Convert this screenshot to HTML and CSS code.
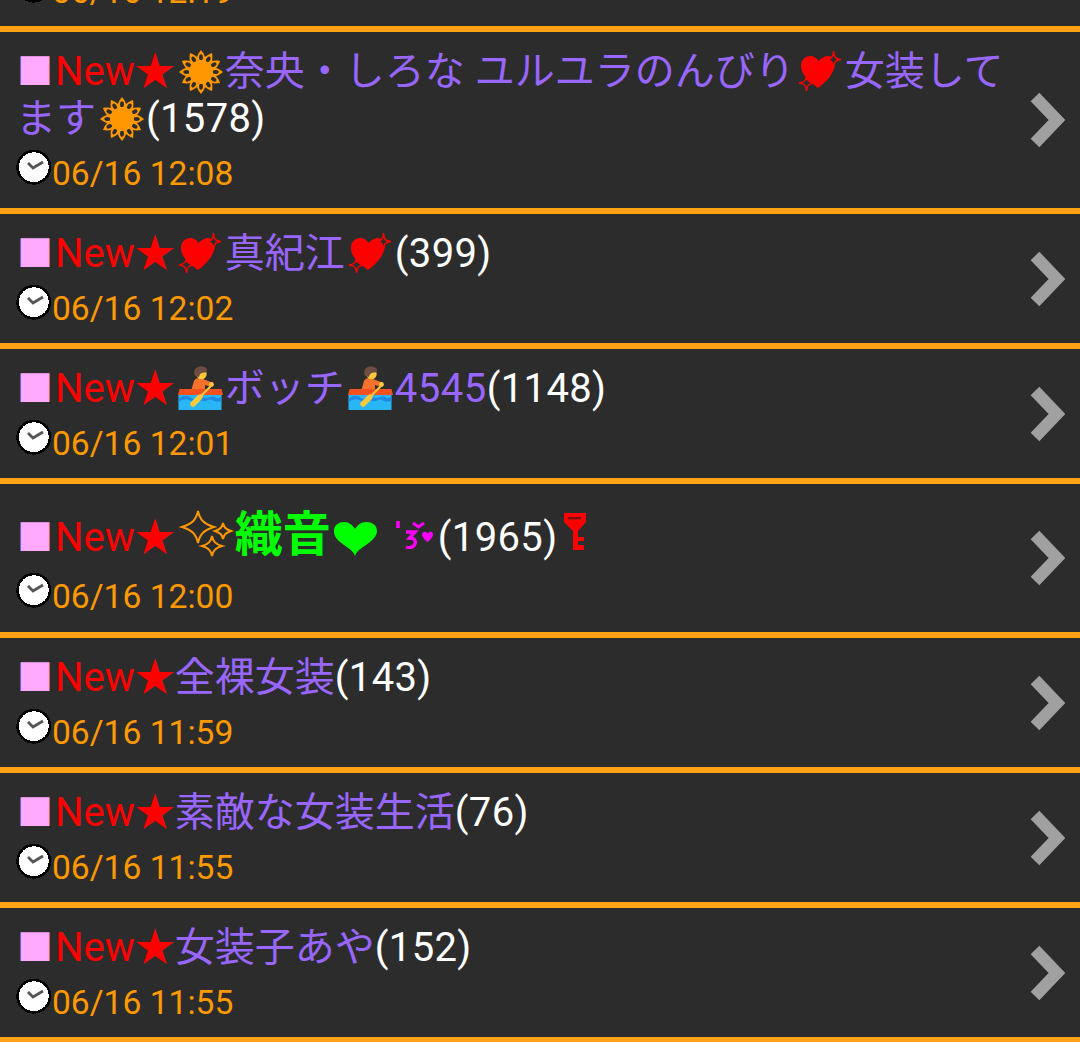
FILE: index.html
```html
<!DOCTYPE html>
<html lang="ja">
<head>
    <meta charset="UTF-8">
    <meta name="viewport" content="width=device-width, initial-scale=1.0">
    <title>New</title>
    <link rel="stylesheet" href="styles.css">
</head>
<body>
    <svg class="defs" xmlns="http://www.w3.org/2000/svg">
        <symbol id="flower" viewBox="-1.5 0 50 50">
            <g id="petal">
                <path d="M19.5 16 C19.5 10 22 6 24.5 3 C27 6 29.5 10 29.5 16Z" fill="#ff9800"/>
                <ellipse cx="24.5" cy="10.5" rx="1.9" ry="3.2" fill="#2c2c2c"/>
            </g>
            <use href="#petal" transform="rotate(30 24.5 25)"/>
            <use href="#petal" transform="rotate(60 24.5 25)"/>
            <use href="#petal" transform="rotate(90 24.5 25)"/>
            <use href="#petal" transform="rotate(120 24.5 25)"/>
            <use href="#petal" transform="rotate(150 24.5 25)"/>
            <use href="#petal" transform="rotate(180 24.5 25)"/>
            <use href="#petal" transform="rotate(210 24.5 25)"/>
            <use href="#petal" transform="rotate(240 24.5 25)"/>
            <use href="#petal" transform="rotate(270 24.5 25)"/>
            <use href="#petal" transform="rotate(300 24.5 25)"/>
            <use href="#petal" transform="rotate(330 24.5 25)"/>
            <circle cx="24.5" cy="25" r="12" fill="#ff9800"/>
        </symbol>
        <symbol id="heart" viewBox="-2 0 50 50">
            <path d="M21 41 C12 34 4 28 4 19 C4 12 9 9 13.5 9 C17 9 20 11 21.5 14 C24 11 28 9 31 9 C36 9 38.5 13 37.5 19 C36 28 29 35 21 41Z" fill="#ff0000"/>
            <path d="M36.5 4 C37 10 38 12 44 12.5 C38 13 37 15 36.5 21 C36 15 35 13 29 12.5 C35 12 36 10 36.5 4Z" fill="#2c2c2c" stroke="#ff0000" stroke-width="1.4"/>
            <path d="M9.5 28 C10 34 11 35 17 36 C11 37 10 38 9.5 44 C9 38 8 37 2 36 C8 35 9 34 9.5 28Z" fill="#2c2c2c" stroke="#ff0000" stroke-width="1.4"/>
        </symbol>
        <symbol id="boat" viewBox="-2 0 50 50">
            <path d="M14 27 L17 17 C18 14 23 13 26 15 L35 18.5 L34 23 L28 21 L28 27Z" fill="#f4722b"/>
            <circle cx="24.5" cy="10" r="5.2" fill="#ffc83d"/>
            <path d="M18 12 C15 5 21 1.5 25.5 2.5 C31 3.5 31 7 28.5 8.5 C25 8.5 23 9 22 13Z" fill="#6d4c41"/>
            <circle cx="34.5" cy="20.5" r="2.4" fill="#ffc83d"/>
            <path d="M1 31 H46 L44.5 25 H2.5Z" fill="#f4511e"/>
            <rect x="1.5" y="31" width="43" height="15" fill="#29b6f6"/>
            <path d="M1.5 35 C6 31 10 31 14 34 C18 37 22 31 26 33 C30 36 35 31 38 33 C40 35 42 34 44.5 33 V37 C40 38 38 38 35 36 C31 34 30 38 26 37 C22 35 18 39 14 37 C10 34 6 35 1.5 38Z" fill="#1e88e5"/>
            <path d="M33 23 L22 34" stroke="#ffc83d" stroke-width="2.2" stroke-linecap="round"/>
            <path d="M23 33 L16 40" stroke="#ffc83d" stroke-width="5.4" stroke-linecap="round"/>
        </symbol>
        <symbol id="clock" viewBox="0 0 37 37">
            <circle cx="17.8" cy="18.2" r="16.2" fill="#fff" stroke="#000" stroke-width="2.6" shape-rendering="crispEdges"/>
            <path d="M12 14 L17 19 L27 13" fill="none" stroke="#555" stroke-width="2.8"/>
        </symbol>
        <symbol id="sparkles" viewBox="-2 0 60 60">
            <path d="M21 2 C23 11 27 15 37 18 C27 21 23 25 21 34 C19 25 15 21 5 18 C15 15 19 11 21 2Z" fill="none" stroke="#ff9800" stroke-width="2"/>
            <path d="M46 14 C47 18 48 20 54 22 C48 24 47 26 46 30 C45 26 44 24 38 22 C44 20 45 18 46 14Z" fill="none" stroke="#ff9800" stroke-width="2"/>
            <path d="M35 27 C36 32 38 35 45 37 C38 39 36 42 35 47 C34 42 32 39 25 37 C32 35 34 32 35 27Z" fill="none" stroke="#ff9800" stroke-width="2"/>
        </symbol>
        <symbol id="green-heart" viewBox="0 0 48 48">
            <path d="M24 46 C22.5 40 15 37 9 32 C4 28 3 24 3 21 C3 15 8 12 13 12 C18 12 21.5 15 24 19 C26.5 15 30 12 35 12 C41 12 46 15 46 21 C46 24 44 28 39 32 C33 37 25.5 40 24 46Z" fill="#00ff00"/>
        </symbol>
        <symbol id="kiss" viewBox="0 0 59 60">
            <path d="M19 12 V19" stroke="#ff00ff" stroke-width="3.6"/>
            <path d="M34 14 L39.5 18 L45 14" fill="none" stroke="#ff00ff" stroke-width="3"/>
            <path d="M27 23 H36 L30.5 29 C36 29 37 32 36 35 C34 39 30 39 27 38" fill="none" stroke="#ff00ff" stroke-width="3.4"/>
            <path d="M48.5 33 C45 30 43 28 43 25.5 C43 22 47 22 48.5 24.5 C50 22 54 22 54 25.5 C54 28 52 30 48.5 33Z" fill="#ff00ff"/>
        </symbol>
        <symbol id="key" viewBox="0 0 32 50">
            <path d="M7 4 H29 V13 L21 22 V41 H16 V22 L7 13Z" fill="#ff0000"/>
            <rect x="11" y="8" width="13" height="2.4" fill="#7a1010"/>
            <rect x="21" y="28" width="6" height="4" fill="#ff0000"/>
            <rect x="21" y="36" width="6" height="5" fill="#ff0000"/>
        </symbol>
        <symbol id="chevron" viewBox="0 0 40 60">
            <path d="M6 7 L28 30 L6 53" fill="none" stroke="#a0a0a0" stroke-width="12"/>
        </symbol>
    </svg>

    <div class="list">
        <div class="row">
            <div class="row-main">
                <div class="title"><span class="mark">■</span><span class="new">New★</span></div>
                <div class="date"><svg class="clock"><use href="#clock"/></svg>06/16 12:19</div>
            </div>
            <svg class="chevron"><use href="#chevron"/></svg>
        </div>

        <div class="row">
            <div class="row-main">
                <div class="title"><span class="mark">■</span><span class="new">New★</span><svg class="emoji"><use href="#flower"/></svg><span class="name">奈央・しろな ユルユラのんびり</span><svg class="emoji"><use href="#heart"/></svg><span class="name">女装してます</span><svg class="emoji"><use href="#flower"/></svg><span class="count">(1578)</span></div>
                <div class="date"><svg class="clock"><use href="#clock"/></svg>06/16 12:08</div>
            </div>
            <svg class="chevron"><use href="#chevron"/></svg>
        </div>

        <div class="row">
            <div class="row-main">
                <div class="title"><span class="mark">■</span><span class="new">New★</span><svg class="emoji"><use href="#heart"/></svg><span class="name">真紀江</span><svg class="emoji"><use href="#heart"/></svg><span class="count">(399)</span></div>
                <div class="date"><svg class="clock"><use href="#clock"/></svg>06/16 12:02</div>
            </div>
            <svg class="chevron"><use href="#chevron"/></svg>
        </div>

        <div class="row">
            <div class="row-main">
                <div class="title"><span class="mark">■</span><span class="new">New★</span><svg class="emoji"><use href="#boat"/></svg><span class="name">ボッチ</span><svg class="emoji"><use href="#boat"/></svg><span class="name digits">4545</span><span class="count">(1148)</span></div>
                <div class="date"><svg class="clock"><use href="#clock"/></svg>06/16 12:01</div>
            </div>
            <svg class="chevron"><use href="#chevron"/></svg>
        </div>

        <div class="row">
            <div class="row-main">
                <div class="title title-tall"><span class="mark">■</span><span class="new">New★</span><svg class="emoji-tall sparkles"><use href="#sparkles"/></svg><span class="green">織音</span><svg class="emoji-tall green-heart"><use href="#green-heart"/></svg><svg class="emoji-tall kiss"><use href="#kiss"/></svg><span class="count">(1965)</span><svg class="emoji-tall key"><use href="#key"/></svg></div>
                <div class="date"><svg class="clock"><use href="#clock"/></svg>06/16 12:00</div>
            </div>
            <svg class="chevron"><use href="#chevron"/></svg>
        </div>

        <div class="row">
            <div class="row-main">
                <div class="title"><span class="mark">■</span><span class="new">New★</span><span class="name">全裸女装</span><span class="count">(143)</span></div>
                <div class="date"><svg class="clock"><use href="#clock"/></svg>06/16 11:59</div>
            </div>
            <svg class="chevron"><use href="#chevron"/></svg>
        </div>

        <div class="row">
            <div class="row-main">
                <div class="title"><span class="mark">■</span><span class="new">New★</span><span class="name">素敵な女装生活</span><span class="count">(76)</span></div>
                <div class="date"><svg class="clock"><use href="#clock"/></svg>06/16 11:55</div>
            </div>
            <svg class="chevron"><use href="#chevron"/></svg>
        </div>

        <div class="row">
            <div class="row-main">
                <div class="title"><span class="mark">■</span><span class="new">New★</span><span class="name">女装子あや</span><span class="count">(152)</span></div>
                <div class="date"><svg class="clock"><use href="#clock"/></svg>06/16 11:55</div>
            </div>
            <svg class="chevron"><use href="#chevron"/></svg>
        </div>
    </div>
</body>
</html>
```

FILE: styles.css
```css
html {
    background: #2c2c2c;
}

body {
    margin: 0;
    height: 1042px;
    overflow: hidden;
    font-family: Roboto, "Noto Sans CJK JP", sans-serif;
    background: #2c2c2c;
}

.defs {
    display: none;
}

/* first row is cut off by the top of the screen */
.list {
    margin-top: -103px;
}

.row {
    display: flex;
    align-items: center;
    border-bottom: 6px solid #ffa216;
}

.row-main {
    flex: 1;
    min-width: 0;
    padding: 16px 0 15px 16px;
}

.title {
    font-size: 40px;
    line-height: 47px;
}

.title-tall {
    margin-top: 8px;
    line-height: 54px;
}

.title-tall + .date {
    margin-bottom: 1px;
}

.mark {
    display: inline-block;
    width: 38px;
    padding-left: 1px;
    color: #ffaaff;
    font-size: 36px;
    line-height: 1;
}

.new {
    color: #ff0000;
}

.name {
    color: #9966ff;
}

.digits {
    letter-spacing: 0.5px;
}

.count {
    color: #ffffff;
    letter-spacing: 0.35px;
}

.green {
    color: #00ff00;
    font-size: 48px;
    font-weight: bold;
}

.emoji {
    width: 50px;
    height: 50px;
    margin: -8px 0;
    vertical-align: -4px;
}

.emoji-tall {
    height: 60px;
    margin: -10px 0;
    vertical-align: -8px;
}

.sparkles {
    width: 60px;
}

.green-heart {
    width: 48px;
    height: 48px;
    vertical-align: 3px;
}

.kiss {
    width: 59px;
}

.key {
    width: 32px;
    height: 50px;
    vertical-align: 2px;
}

.date {
    margin-top: 7px;
    color: #ff9900;
    font-size: 33.6px;
    line-height: 39px;
}

.clock {
    width: 37px;
    height: 37px;
    margin-right: -1px;
    vertical-align: -1px;
}

.chevron {
    flex: none;
    width: 40px;
    height: 60px;
    margin-right: 11px;
    filter: blur(0.7px);
}
```
